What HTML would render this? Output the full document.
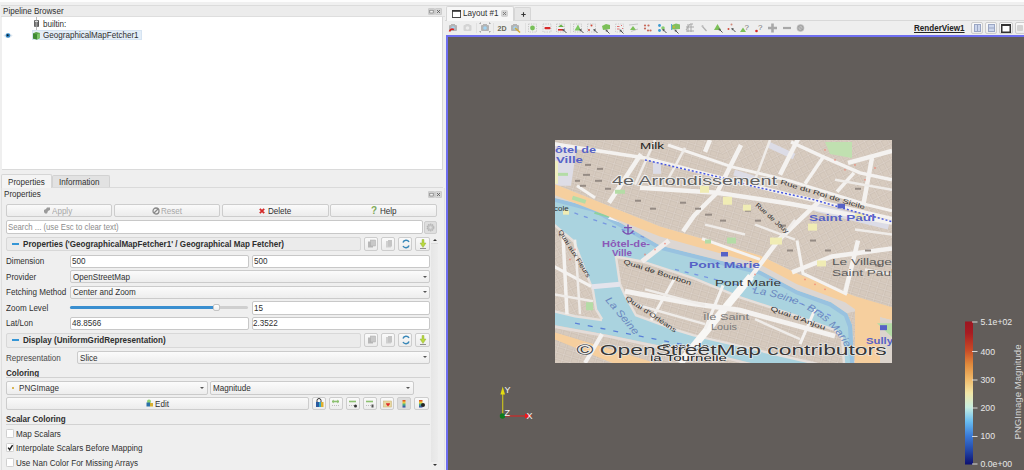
<!DOCTYPE html>
<html><head><meta charset="utf-8">
<style>
*{box-sizing:border-box;margin:0;padding:0}
html,body{width:1024px;height:470px;overflow:hidden;background:#efefef;font-family:"Liberation Sans",sans-serif;font-size:8px;color:#303030}
.a{position:absolute}
.t{position:absolute;white-space:nowrap;line-height:11px;font-size:8.5px;transform:scaleX(0.95);transform-origin:0 0}
.inp{position:absolute;background:#fff;border:1px solid #c8c8c8;border-radius:2px}
.btn{position:absolute;background:linear-gradient(#fafafa,#ececec);border:1px solid #cdcdcd;border-radius:2px}
.hdr{position:absolute;background:#ebebeb;border:1px solid #d8d8d8;border-radius:2px}
.cb{position:absolute;background:linear-gradient(#fbfbfb,#ededed);border:1px solid #cbcbcb;border-radius:2px}
.arr{position:absolute;width:0;height:0;border-left:2.5px solid transparent;border-right:2.5px solid transparent;border-top:2.5px solid #555;margin-left:0.5px;margin-top:0.3px}
.chk{position:absolute;width:8px;height:9px;background:#fff;border:1px solid #d0d0d0;border-radius:1.5px;box-shadow:0 0 0.5px #ddd}
.b{font-weight:bold;color:#2e2e2e}
</style></head><body>
<!-- top strip -->
<div class="a" style="left:0;top:0;width:1024px;height:2px;background:#fdfdfd"></div><div class="a" style="left:0;top:2px;width:1024px;height:3px;background:#f0f0f0"></div><div class="a" style="left:445px;top:5px;width:579px;height:1px;background:#dcdcdc"></div>

<!-- ===== Pipeline browser ===== -->
<div class="a" style="left:1px;top:5px;width:444px;height:12px;background:#ececec;border-top:1px solid #dcdcdc;border-bottom:1px solid #dedede"></div>
<div class="t" style="left:3px;top:6px">Pipeline Browser</div>
<div class="a" style="left:2px;top:17px;width:441px;height:152px;background:#fff;border-right:1px solid #d8d8d8"></div>

<!-- ===== splitter + tabs ===== -->
<div class="a" style="left:2px;top:169px;width:441px;height:1px;background:#dadada"></div>


<!-- tree -->
<div class="a" style="left:36px;top:17px;width:1px;height:14px;background:#bdbdbd"></div>
<div class="a" style="left:34px;top:20px;width:5px;height:7px;background:linear-gradient(90deg,#555,#9a9a9a 50%,#444);border-radius:1px"></div>
<div class="a" style="left:35px;top:21px;width:3px;height:1px;background:#ddd"></div>
<div class="t" style="left:43px;top:18.5px">builtin:</div>
<div class="a" style="left:32px;top:30px;width:110px;height:10px;background:#e4eef8;border:1px solid #d6e4f2"></div>
<svg class="a" style="left:32px;top:31px" width="9" height="9" viewBox="0 0 9 9"><path d="M1 2.5 L4 1 L8 2 L8 7 L5 8.5 L1 7.5Z" fill="#5aa04a"/><path d="M1 2.5 L5 3.5 L5 8.5 L1 7.5Z" fill="#3f8a35"/><path d="M5 3.5 L8 2 L8 7 L5 8.5Z" fill="#7cc46a"/></svg>
<div class="t" style="left:43px;top:29.7px">GeographicalMapFetcher1</div>
<svg class="a" style="left:2.5px;top:31.5px" width="10" height="7" viewBox="0 0 10 7"><path d="M0.3 3.5 Q5 -1.5 9.7 3.5 Q5 8.5 0.3 3.5Z" fill="#dde6ee"/><circle cx="5" cy="3.5" r="2.3" fill="#3288c8"/><circle cx="4.7" cy="3.2" r="1" fill="#0a1a28"/></svg>

<!-- dock buttons pipeline -->
<svg class="a" style="left:428px;top:8px" width="14" height="7" viewBox="0 0 14 7"><rect x="0.3" y="0.3" width="6.4" height="6.4" rx="1.2" fill="#d6d6d6" stroke="#bcbcbc" stroke-width="0.6"/><rect x="1.8" y="2.2" width="3.4" height="2.8" fill="#f2f2f2" stroke="#666" stroke-width="0.6"/><rect x="7.3" y="0.3" width="6.4" height="6.4" rx="1.2" fill="#d6d6d6" stroke="#bcbcbc" stroke-width="0.6"/><path d="M9 2 L12 5 M12 2 L9 5" stroke="#555" stroke-width="0.8"/></svg>


<!-- tabs -->
<div class="a" style="left:1px;top:187px;width:442px;height:1px;background:#dadada"></div>
<div class="a" style="left:1px;top:174px;width:51px;height:14px;background:#f4f4f4;border:1px solid #d6d6d6;border-bottom:none;border-radius:2px 2px 0 0"></div>
<div class="a" style="left:52px;top:175px;width:57.5px;height:12px;background:#e2e2e2;border:1px solid #d2d2d2;border-bottom:none;border-radius:2px 2px 0 0"></div>
<div class="t" style="left:8px;top:176.5px">Properties</div>
<div class="t" style="left:59px;top:176.5px">Information</div>
<div class="t" style="left:3.5px;top:189.2px">Properties</div>
<svg class="a" style="left:428px;top:191px" width="14" height="7" viewBox="0 0 14 7"><rect x="0.3" y="0.3" width="6.4" height="6.4" rx="1.2" fill="#d6d6d6" stroke="#bcbcbc" stroke-width="0.6"/><rect x="1.8" y="2.2" width="3.4" height="2.8" fill="#f2f2f2" stroke="#666" stroke-width="0.6"/><rect x="7.3" y="0.3" width="6.4" height="6.4" rx="1.2" fill="#d6d6d6" stroke="#bcbcbc" stroke-width="0.6"/><path d="M9 2 L12 5 M12 2 L9 5" stroke="#555" stroke-width="0.8"/></svg>


<!-- buttons -->
<div class="btn" style="left:6px;top:204px;width:106px;height:13px"></div>
<svg class="a" style="left:43px;top:207px" width="8" height="7" viewBox="0 0 8 7"><path d="M1 3 L3 2 L4 0.5 L7 0.5 L7 3 L5 4 L4 6.5 L2 6.5 L1 5Z" fill="#9a9a9a"/></svg>
<div class="t" style="left:52px;top:206px;color:#a8a8a8">Apply</div>
<div class="btn" style="left:114px;top:204px;width:106px;height:13px"></div>
<svg class="a" style="left:152px;top:207px" width="8" height="8" viewBox="0 0 8 8"><circle cx="4" cy="4" r="3" fill="none" stroke="#888" stroke-width="1.3"/><path d="M2 6 L6 2" stroke="#888" stroke-width="1.3"/></svg>
<div class="t" style="left:161px;top:206px;color:#a8a8a8">Reset</div>
<div class="btn" style="left:222px;top:204px;width:107px;height:13px"></div>
<svg class="a" style="left:259px;top:207.5px" width="6" height="6" viewBox="0 0 6 6"><path d="M0.8 0.8 L5.2 5.2 M5.2 0.8 L0.8 5.2" stroke="#d42a2a" stroke-width="1.8"/></svg>
<div class="t" style="left:268px;top:206px">Delete</div>
<div class="btn" style="left:330px;top:204px;width:107px;height:13px"></div>
<div class="t" style="left:370.5px;top:204.5px;color:#80aa58;font-size:10.5px;font-weight:bold">?</div>
<div class="t" style="left:379.5px;top:206px">Help</div>

<!-- search -->
<div class="inp" style="left:6px;top:220px;width:417px;height:14px"></div>
<div class="t" style="left:7.5px;top:222.2px;color:#8c8c8c;font-size:8.2px">Search ... (use Esc to clear text)</div>
<div class="btn" style="left:424px;top:221px;width:13px;height:13px;background:#dedede"></div><svg class="a" style="left:426px;top:223px" width="9" height="9" viewBox="0 0 9 9"><circle cx="4.5" cy="4.5" r="3.3" fill="#c4c4c4" stroke="#b4b4b4" stroke-width="1.2" stroke-dasharray="1.3 0.8"/><circle cx="4.5" cy="4.5" r="1.2" fill="#dedede"/></svg>

<!-- section header 1 -->
<div class="hdr" style="left:6px;top:237px;width:355px;height:14px"></div>
<div class="a" style="left:12px;top:242.5px;width:7px;height:2.5px;background:#3596d6"></div>
<div class="t b" style="left:23px;top:239px">Properties ('GeographicalMapFetcher1' / Geographical Map Fetcher)</div>
<div class="btn" style="left:364px;top:237px;width:14px;height:14px"></div>
<div class="btn" style="left:381px;top:237px;width:14px;height:14px"></div>
<div class="btn" style="left:398px;top:237px;width:14px;height:14px"></div>
<div class="btn" style="left:415px;top:237px;width:14.5px;height:14px"></div><svg class="a" style="left:364px;top:237px" width="67" height="14" viewBox="0 0 67 14">
<rect x="4" y="4.5" width="5" height="6" fill="#b8b8b8"/><rect x="6.5" y="3" width="5" height="6" fill="#c8c8c8" stroke="#aaa" stroke-width="0.5"/>
<rect x="22" y="4" width="5" height="6.5" fill="#d0d0d0"/><rect x="24" y="3" width="4" height="6.5" fill="#c4c4c4"/>
<path d="M39 5.5 A3.3 3.3 0 0 1 45 5" stroke="#3a88b8" stroke-width="1.5" fill="none"/><path d="M45 8.5 A3.3 3.3 0 0 1 39 9" stroke="#3a88b8" stroke-width="1.5" fill="none"/>
<path d="M58 2.5 L60 2.5 L60 6 L62 6 L59 10.5 L56 6 L58 6Z" fill="#b8d840" stroke="#8aa830" stroke-width="0.4"/><rect x="56" y="11" width="6" height="0.8" fill="#777"/>
</svg>

<!-- rows -->
<div class="t" style="left:6px;top:255.9px">Dimension</div>
<div class="inp" style="left:70px;top:255px;width:179px;height:13px"></div>
<div class="t" style="left:72px;top:255.9px">500</div>
<div class="inp" style="left:252px;top:255px;width:178px;height:13px"></div>
<div class="t" style="left:254px;top:255.9px">500</div>

<div class="t" style="left:6px;top:271.5px">Provider</div>
<div class="cb" style="left:70px;top:270px;width:360px;height:13px"></div>
<div class="t" style="left:73px;top:271.5px">OpenStreetMap</div>
<div class="arr" style="left:422px;top:276px"></div>

<div class="t" style="left:6px;top:287.3px">Fetching Method</div>
<div class="cb" style="left:70px;top:286px;width:360px;height:13px"></div>
<div class="t" style="left:73px;top:287.3px">Center and Zoom</div>
<div class="arr" style="left:422px;top:291px"></div>

<div class="t" style="left:6px;top:302.5px">Zoom Level</div>
<div class="a" style="left:70px;top:306px;width:178px;height:3px;background:#cfcfcf;border-radius:2px"></div>
<div class="a" style="left:70px;top:306px;width:145px;height:3px;background:#3a8fd0;border-radius:2px"></div>
<div class="a" style="left:213px;top:304px;width:7px;height:7px;background:linear-gradient(#fff,#eee);border:1px solid #c4c4c4;border-radius:2px"></div>
<div class="inp" style="left:252px;top:301px;width:178px;height:14px"></div>
<div class="t" style="left:254px;top:302.5px">15</div>

<div class="t" style="left:6px;top:318px">Lat/Lon</div>
<div class="inp" style="left:70px;top:317px;width:179px;height:13px"></div>
<div class="t" style="left:72px;top:318px">48.8566</div>
<div class="inp" style="left:252px;top:317px;width:178px;height:13px"></div>
<div class="t" style="left:253px;top:318px">2.3522</div>

<!-- section header 2 -->
<div class="hdr" style="left:6px;top:333px;width:355px;height:14.5px"></div>
<div class="a" style="left:12px;top:338.5px;width:7px;height:2.5px;background:#3596d6"></div>
<div class="t b" style="left:23px;top:335px">Display (UniformGridRepresentation)</div>
<div class="btn" style="left:364px;top:333px;width:14px;height:14px"></div>
<div class="btn" style="left:381px;top:333px;width:14px;height:14px"></div>
<div class="btn" style="left:398px;top:333px;width:14px;height:14px"></div>
<div class="btn" style="left:415px;top:333px;width:14.5px;height:14px"></div><svg class="a" style="left:364px;top:333px" width="67" height="14" viewBox="0 0 67 14">
<rect x="4" y="4.5" width="5" height="6" fill="#b8b8b8"/><rect x="6.5" y="3" width="5" height="6" fill="#c8c8c8" stroke="#aaa" stroke-width="0.5"/>
<rect x="22" y="4" width="5" height="6.5" fill="#d0d0d0"/><rect x="24" y="3" width="4" height="6.5" fill="#c4c4c4"/>
<path d="M39 5.5 A3.3 3.3 0 0 1 45 5" stroke="#3a88b8" stroke-width="1.5" fill="none"/><path d="M45 8.5 A3.3 3.3 0 0 1 39 9" stroke="#3a88b8" stroke-width="1.5" fill="none"/>
<path d="M58 2.5 L60 2.5 L60 6 L62 6 L59 10.5 L56 6 L58 6Z" fill="#b8d840" stroke="#8aa830" stroke-width="0.4"/><rect x="56" y="11" width="6" height="0.8" fill="#777"/>
</svg>

<div class="t" style="left:6px;top:353px;color:#4a4a4a">Representation</div>
<div class="cb" style="left:77px;top:351px;width:353px;height:13px"></div>
<div class="t" style="left:80px;top:353px">Slice</div>
<div class="arr" style="left:422px;top:356px"></div>

<div class="t b" style="left:6px;top:368px">Coloring</div>
<div class="a" style="left:6px;top:377px;width:424px;height:1px;background:#d2d2d2"></div>
<div class="cb" style="left:6px;top:381px;width:202px;height:14px"></div>
<div class="a" style="left:12px;top:387px;width:2px;height:2px;background:#d0a020;border-radius:1px"></div>
<div class="t" style="left:19px;top:383px">PNGImage</div>
<div class="arr" style="left:199px;top:387px"></div>
<div class="cb" style="left:210px;top:381px;width:204px;height:14px"></div>
<div class="t" style="left:212.5px;top:383px">Magnitude</div>
<div class="arr" style="left:405px;top:387px"></div>

<div class="btn" style="left:6px;top:397px;width:303px;height:13px"></div>
<svg class="a" style="left:145.5px;top:399px" width="8" height="8" viewBox="0 0 8 8"><circle cx="3" cy="2.5" r="2" fill="#90d070"/><rect x="0.5" y="3.5" width="3.5" height="4" fill="#2a70a8"/><rect x="4" y="4" width="3" height="3.5" fill="#d8b030"/></svg>
<div class="t" style="left:155px;top:398.5px">Edit</div>
<div class="btn" style="left:312px;top:397px;width:14px;height:13px"></div>
<div class="btn" style="left:329px;top:397px;width:14px;height:13px"></div>
<div class="btn" style="left:346px;top:397px;width:14px;height:13px"></div>
<div class="btn" style="left:363px;top:397px;width:14px;height:13px"></div>
<div class="btn" style="left:380px;top:397px;width:14px;height:13px"></div>
<div class="btn" style="left:397px;top:397px;width:14px;height:13px;background:#dcdcdc"></div>
<div class="btn" style="left:414px;top:397px;width:15px;height:13px"></div><svg class="a" style="left:312px;top:397px" width="118" height="13" viewBox="0 0 118 13">
<rect x="4" y="5" width="3" height="5" fill="#2a5aa0"/><rect x="7" y="5" width="2" height="5" fill="#38a8c8"/><rect x="9" y="5" width="2.5" height="5" fill="#e0b030"/><path d="M5 5 L5 3.5 A2 2 0 0 1 9 3.5 L9 5" stroke="#333" stroke-width="1" fill="none"/>
<g transform="translate(17 0)"><path d="M3 4.5 L10 4.5" stroke="#8cc070" stroke-width="1.6"/><path d="M3 4.5 L5 3 M3 4.5 L5 6 M10 4.5 L8 3 M10 4.5 L8 6" stroke="#8cc070" stroke-width="0.8"/><path d="M3 8.5 L10 8.5" stroke="#999" stroke-width="0.6" stroke-dasharray="1 1"/></g>
<g transform="translate(34 0)"><path d="M3 4.5 L10 4.5" stroke="#8cc070" stroke-width="1.6"/><path d="M3 8.5 L8 8.5" stroke="#999" stroke-width="0.6" stroke-dasharray="1 1"/><circle cx="9.5" cy="9" r="1.5" fill="#333"/></g>
<g transform="translate(51 0)"><path d="M3 4.5 L10 4.5" stroke="#8cc070" stroke-width="1.6"/><path d="M3 8.5 L8 8.5" stroke="#999" stroke-width="0.6" stroke-dasharray="1 1"/><rect x="8.5" y="7.5" width="2" height="3" fill="#555"/></g>
<g transform="translate(68 0)"><rect x="3.5" y="4" width="8" height="6" fill="#e8d8a0" stroke="#c8b070" stroke-width="0.5"/><path d="M6 7 Q6.5 5.5 8 6.5 Q9.5 5.5 10 7 L8 9.5Z" fill="#e02828"/></g>
<g transform="translate(85 0)"><rect x="5.5" y="3" width="3" height="7.5" fill="url(#cbar)"/></g>
<g transform="translate(102 0)"><rect x="5" y="3" width="3.5" height="7.5" fill="url(#cbar)"/><circle cx="9" cy="8" r="2" fill="#222"/></g>
<defs><linearGradient id="cbar" x1="0" y1="0" x2="0" y2="1"><stop offset="0" stop-color="#e04020"/><stop offset="0.35" stop-color="#e8d040"/><stop offset="0.6" stop-color="#50b080"/><stop offset="1" stop-color="#3040b0"/></linearGradient></defs>
</svg>

<div class="t b" style="left:6px;top:414px">Scalar Coloring</div>
<div class="a" style="left:6px;top:424px;width:424px;height:1px;background:#d2d2d2"></div>

<div class="chk" style="left:6px;top:429px"></div>
<div class="t" style="left:16px;top:429px">Map Scalars</div>
<div class="chk" style="left:6px;top:443px"></div>
<svg class="a" style="left:7px;top:444px" width="7" height="7" viewBox="0 0 7 7"><path d="M1.2 3.6 L2.7 5.6 L5.6 1.2" stroke="#222" stroke-width="1.5" fill="none"/></svg>
<div class="t" style="left:16px;top:443px">Interpolate Scalars Before Mapping</div>
<div class="chk" style="left:6px;top:458px"></div>
<div class="t" style="left:16px;top:458px">Use Nan Color For Missing Arrays</div>

<!-- scrollbar -->
<div class="a" style="left:431px;top:244px;width:7px;height:218px;background:linear-gradient(90deg,#e6e6e6,#ececec)"></div>
<div class="a" style="left:431px;top:243px;width:7px;height:1px;background:#dcdcdc"></div>
<div class="arr" style="left:432px;top:238.5px;border-left-width:2.5px;border-right-width:2.5px;border-top:none;border-bottom:2.5px solid #333"></div>
<div class="arr" style="left:432px;top:464px;border-left-width:2.5px;border-right-width:2.5px;border-top-width:2.5px;border-top-color:#333"></div>
<div class="a" style="left:443.5px;top:188px;width:1px;height:282px;background:#e2e2e2"></div>
<div class="a" style="left:1px;top:188px;width:1px;height:282px;background:#dedede"></div>

<!-- ===== Right side ===== -->
<!-- tab bar -->
<div class="a" style="left:445px;top:20px;width:579px;height:1px;background:#d8d8d8"></div>
<div class="a" style="left:446px;top:6px;width:68px;height:15px;background:#f7f7f7;border:1px solid #d6d6d6;border-bottom:none;border-radius:2px 2px 0 0"></div>
<svg class="a" style="left:452px;top:10px" width="9" height="8" viewBox="0 0 9 8"><rect x="0.5" y="0.5" width="8" height="7" fill="#fff" stroke="#555" stroke-width="1"/><rect x="0" y="0" width="9" height="1.8" fill="#333"/><rect x="0" y="7" width="9" height="1" fill="#444"/></svg>
<div class="t" style="left:463px;top:7.5px">Layout #1</div>
<svg class="a" style="left:501px;top:10px" width="7" height="7" viewBox="0 0 7 7"><rect width="7" height="7" rx="1.8" fill="#d4d4d4"/><path d="M2 2 L5 5 M5 2 L2 5" stroke="#777" stroke-width="0.9"/></svg>
<div class="a" style="left:514px;top:7px;width:17px;height:13px;background:#e6e6e6;border:1px solid #d6d6d6;border-bottom:none;border-radius:2px 2px 0 0"></div>
<svg class="a" style="left:520.5px;top:12px" width="5" height="5" viewBox="0 0 5 5"><path d="M2.5 0.3 L2.5 4.7 M0.3 2.5 L4.7 2.5" stroke="#333" stroke-width="1.1"/></svg>

<!-- toolbar -->
<div class="a" style="left:446px;top:21px;width:578px;height:14px;background:#eeeeee"></div>
<!--TB--><svg class="a" style="left:446px;top:21px" width="370" height="14" viewBox="0 0 370 14"><rect x="3" y="4" width="8" height="6" rx="1" fill="#b4b4b4"/><rect x="5" y="3" width="4" height="2" fill="#b4b4b4"/><circle cx="7" cy="7" r="1.8" fill="#a0d4f4"/><path d="M3.5 10.5 Q5 7 8 8.5" stroke="#d82020" stroke-width="1.8" fill="none"/><rect x="17.5" y="4" width="8" height="6" rx="1" fill="#d4d4d4"/><rect x="19.5" y="3" width="4" height="2" fill="#d4d4d4"/><circle cx="21.5" cy="7" r="1.8" fill="#ececec"/><rect x="30" y="2" width="0.8" height="10" fill="#dcdcdc"/><rect x="35" y="4" width="8" height="6" rx="1" fill="#b4b4b4"/><rect x="37" y="3" width="4" height="2" fill="#b4b4b4"/><circle cx="39" cy="7" r="1.8" fill="#a0d4f4"/><path d="M34 3 L34 2 L35 2 M43 2 L44 2 L44 3 M34 10 L34 11 L35 11 M43 11 L44 11 L44 10" stroke="#777" stroke-width="0.7" fill="none"/><rect x="47" y="2" width="0.8" height="10" fill="#dcdcdc"/><text x="51.5" y="10" font-family="Liberation Sans" font-weight="bold" font-size="7" fill="#6a6a58" textLength="9" lengthAdjust="spacingAndGlyphs">2D</text><rect x="65" y="4" width="8" height="6" rx="1" fill="#b4b4b4"/><rect x="67" y="3" width="4" height="2" fill="#b4b4b4"/><circle cx="69" cy="7" r="1.8" fill="#a0d4f4"/><path d="M69 7 L74 11.5" stroke="#d0a838" stroke-width="1.6"/><rect x="79" y="2" width="0.8" height="10" fill="#dcdcdc"/><rect x="82.5" y="3.0" width="8" height="8" fill="none" stroke="#b4b4b4" stroke-width="0.7" stroke-dasharray="1.2 1.2"/><circle cx="86.5" cy="7" r="2.4" fill="#78c058"/><rect x="97.0" y="3.0" width="8" height="8" fill="none" stroke="#b4b4b4" stroke-width="0.7" stroke-dasharray="1.2 1.2"/><rect x="98.5" y="6" width="6" height="2.2" rx="0.8" fill="#d82828"/><rect x="110.5" y="3.0" width="8" height="8" fill="none" stroke="#b4b4b4" stroke-width="0.7" stroke-dasharray="1.2 1.2"/><path d="M112 6 L115 3.5 L118 6Z" fill="#68b048"/><rect x="112" y="8" width="5" height="1.6" fill="#d82828"/><path d="M117 8.5 L120.5 12.0" stroke="#555" stroke-width="1"/><path d="M116.5 8.0 L119 8.5 L117 10.5Z" fill="#555"/><rect x="124" y="2" width="0.8" height="10" fill="#dcdcdc"/><rect x="127.5" y="3.0" width="8" height="8" fill="none" stroke="#b4b4b4" stroke-width="0.7" stroke-dasharray="1.2 1.2"/><path d="M128.5 9.5 L132 3.5 L135 9.5Z" fill="#7cc860"/><path d="M134 8.5 L137.5 12.0" stroke="#555" stroke-width="1"/><path d="M133.5 8.0 L136 8.5 L134 10.5Z" fill="#555"/><rect x="141.5" y="3.0" width="8" height="8" fill="none" stroke="#b4b4b4" stroke-width="0.7" stroke-dasharray="1.2 1.2"/><circle cx="145.5" cy="4.5" r="1" fill="#d04a3a"/><circle cx="143" cy="9" r="1" fill="#d04a3a"/><path d="M148 8.5 L151.5 12.0" stroke="#555" stroke-width="1"/><path d="M147.5 8.0 L150 8.5 L148 10.5Z" fill="#555"/><path d="M156 5 L160 3 L164 4 L164 8 L157 9Z" fill="#7cc058"/><path d="M160 9 L163.5 12.5" stroke="#555" stroke-width="1"/><path d="M159.5 8.5 L162 9 L160 11Z" fill="#555"/><rect x="169.5" y="3.0" width="8" height="8" fill="none" stroke="#c0c0c0" stroke-width="0.7" stroke-dasharray="1.2 1.2"/><g fill="#e07070"><rect x="171" y="5" width="2.5" height="1"/><rect x="171" y="7.5" width="2.5" height="1"/><rect x="175" y="4" width="1" height="1"/><rect x="176" y="7" width="1" height="1"/></g><path d="M174 9 L177.5 12.5" stroke="#555" stroke-width="1"/><path d="M173.5 8.5 L176 9 L174 11Z" fill="#555"/><path d="M184 9 L187 5 L190 9Z" fill="#7cc058"/><path d="M183 4 L192 3 M185 10.5 L192 8" stroke="#aaa" stroke-width="0.6"/><g fill="#c86a5a"><circle cx="199" cy="4.5" r="1.1"/><circle cx="202.5" cy="4.5" r="1.1"/><circle cx="199" cy="7.5" r="1.1"/><circle cx="202" cy="9.5" r="1.1"/><circle cx="204.5" cy="9.5" r="1.1"/></g><g fill="#3a9ad0"><circle cx="213.5" cy="4.5" r="1.4"/><circle cx="213.5" cy="9.5" r="1.4"/></g><circle cx="217" cy="7" r="1.8" fill="#88cc70"/><path d="M217 8.5 L220.5 12.0" stroke="#555" stroke-width="1"/><path d="M216.5 8.0 L219 8.5 L217 10.5Z" fill="#555"/><path d="M226 4 L230 2.5 L234 3.5 L234 8 L226 8.5Z" fill="#82c060"/><rect x="225" y="3" width="1" height="6" fill="#60a8d8"/><circle cx="228" cy="6" r="0.9" fill="#d8b030"/><path d="M229 9 L232.5 12.5" stroke="#555" stroke-width="1"/><path d="M228.5 8.5 L231 9 L229 11Z" fill="#555"/><g stroke="#a8a8a8" stroke-width="1" fill="none"><path d="M240 9 L244 3 L247 3 M240 6 L248 6 M240 10 L248 10 M242 3 L242 11 M245 3 L245 11"/></g><path d="M256 5 L260.5 10" stroke="#b0b0b0" stroke-width="1.2"/><circle cx="256.5" cy="5" r="1" fill="#c0c0c0"/><path d="M268 9 L271.5 3 L275 9Z" fill="#7cc058"/><path d="M273 8 L276.5 11.5" stroke="#555" stroke-width="1"/><path d="M272.5 7.5 L275 8 L273 10Z" fill="#555"/><circle cx="282.5" cy="8" r="1" fill="#d04a3a"/><circle cx="285.5" cy="3.5" r="1" fill="#d08a7a"/><path d="M286 7.5 L289.5 11.0" stroke="#555" stroke-width="1"/><path d="M285.5 7.0 L288 7.5 L286 9.5Z" fill="#555"/><path d="M294 11 L297 6.5 L300 11Z" fill="#7cc058"/><text x="298.5" y="9" font-family="Liberation Sans" font-size="8" fill="#777">?</text><circle cx="310.5" cy="10" r="1.3" fill="#d82828"/><text x="312" y="8.5" font-family="Liberation Sans" font-size="8" fill="#777">?</text><path d="M322 7 L331 7 M326.5 2.5 L326.5 11.5" stroke="#a8a8a8" stroke-width="2.6"/><path d="M337 7 L345 7" stroke="#a8a8a8" stroke-width="2.2"/><circle cx="354.5" cy="7" r="3.8" fill="#bdbdbd"/><circle cx="354.5" cy="7" r="2.6" fill="none" stroke="#999" stroke-width="0.8"/><path d="M352.5 5 L356.5 9" stroke="#999" stroke-width="0.8"/></svg><!--/TB-->
<div class="t b" style="left:914px;top:23px;text-decoration:underline;color:#222">RenderView1</div>
<div class="btn" style="left:971px;top:22px;width:12px;height:12px"></div>
<svg class="a" style="left:974px;top:24px" width="7" height="8" viewBox="0 0 7 8"><rect x="0.5" y="0.5" width="6" height="7" fill="#ccd6ec" stroke="#9aa6c4"/><line x1="3.5" y1="0.5" x2="3.5" y2="7.5" stroke="#9aa6c4"/></svg>
<div class="btn" style="left:985px;top:22px;width:12px;height:12px"></div>
<svg class="a" style="left:988px;top:24px" width="7" height="8" viewBox="0 0 7 8"><rect x="0.5" y="0.5" width="6" height="7" fill="#ccd6ec" stroke="#9aa6c4"/><line x1="0.5" y1="4" x2="6.5" y2="4" stroke="#9aa6c4"/></svg>
<div class="btn" style="left:999px;top:22px;width:14px;height:12px"></div>
<svg class="a" style="left:1001px;top:23.5px" width="10" height="9" viewBox="0 0 10 9"><rect x="0.75" y="0.75" width="8.5" height="7.5" fill="#fff" stroke="#333" stroke-width="1.5"/><rect x="0" y="0" width="10" height="2" fill="#333"/></svg>
<div class="btn" style="left:1015px;top:22px;width:12px;height:12px"></div>
<div class="a" style="left:1017px;top:25px;width:6px;height:6px;background:#d2d2d2;border-radius:1px"></div>

<div class="a" style="left:446px;top:35px;width:578px;height:435px;background:#625d5a;border-left:2.5px solid #6e6ef0;border-top:2px solid #6e6ef0"></div>

<svg class="a" style="left:555px;top:140px" width="337" height="223" viewBox="0 0 337 224" preserveAspectRatio="none">
<defs><clipPath id="mc"><rect width="337" height="224"/></clipPath>
<pattern id="bld" width="8" height="6" patternUnits="userSpaceOnUse" patternTransform="rotate(17)">
<rect width="8" height="6" fill="#dfd6cd"/><rect x="0.5" y="0.5" width="6.5" height="4.5" fill="#d6cabe" stroke="#c8baae" stroke-width="0.6"/></pattern>
<pattern id="bld2" width="7" height="7" patternUnits="userSpaceOnUse" patternTransform="rotate(-28)">
<rect width="7" height="7" fill="#e0d7ce"/><rect x="0.5" y="0.5" width="5.5" height="5.5" fill="#d7cbbf" stroke="#c9bbaf" stroke-width="0.6"/></pattern>
</defs>
<g clip-path="url(#mc)">
<rect width="337" height="224" fill="url(#bld)"/>
<path d="M160 0 L337 0 L337 110 L240 135 L190 60Z" fill="url(#bld2)"/>
<!-- plaza top-left -->
<path d="M-1 2 L22 6 L16 46 L-1 46Z" fill="#dedde6"/>
<path d="M-1 18 L3 18 L3 44 L-1 44Z" fill="#f0eec0"/>
<!-- pedestrian strips -->
<g fill="#dcdce6"><rect x="215" y="2" width="28" height="6" transform="rotate(25 215 2)"/><rect x="-1" y="12" width="18" height="8" transform="rotate(20 0 12)"/><rect x="180" y="30" width="22" height="6" transform="rotate(17 180 30)"/><rect x="262" y="64" width="75" height="8" transform="rotate(14 262 64)"/><rect x="98" y="22" width="8" height="12"/><rect x="150" y="125" width="40" height="5" transform="rotate(-15 150 125)"/></g>
<!-- river -->
<path d="M-1 58 L39 68 L105 106 L205 131 L242 151 L276 163 L292 174 L297 186 L299 224 L-1 224Z" fill="#aad3df"/>
<path d="M-1 58 L39 68 L105 106 L205 131 L242 151 L276 163 L292 174 L297 186 L299 224 L295 224 L293 188 L289 177 L274 167 L241 155 L204 135 L104 110 L38 72 L-1 62Z" fill="#98c2e0"/>
<!-- boat -->
<path d="M55 76 L68 80 L66 83 L53 79Z" fill="#f4f4f4"/><path d="M40 72 L55 76 L54 78 L39 74Z" fill="#8cd0a0"/>
<!-- islands -->
<path d="M-1 84 L19 101 L34 140 L38 150 L41 170 L47 181 L20 176 L-1 171Z" fill="url(#bld2)"/>
<path d="M60 116 L87 121 L139 138 L185 157 L242 176 L280 190 L287 198 L290 225 L262 225 L245 221 L138 196 L120 190.5 L81 176 L70 156 L65 145Z" fill="url(#bld)"/>
<path d="M-1 186 L55 196 L102 206 L145 211.5 L200 225 L-1 225Z" fill="url(#bld)"/>
<path d="M-1 186 L55 196 L102 206 L145 211.5 L200 225 L190 225 L145 214 L102 209 L55 199 L-1 189Z" fill="#e4dcd8"/>
<!-- island quay outlines -->
<g stroke="#e6e0dc" stroke-width="2.4" fill="none">
<path d="M-1 85 L19 102 L34 141 L38 151 L41 170 L47 180"/>
<path d="M60 117 L87 122 L139 139 L185 158 L242 177 L280 191 L287 199 L289 224"/>
<path d="M61 117 L65 145 L70 156 L81 176 L120 190.5 L138 196 L245 221 L262 225"/>
<path d="M-1 172 L20 177 L47 181"/>
</g>
<!-- river dashes -->
<g stroke="#7898e0" stroke-width="1.3" stroke-dasharray="4 6" fill="none"><path d="M10 70 L90 98"/><path d="M120 130 L200 150"/><path d="M20 184 L140 208" stroke="#5a80d8" stroke-dasharray="5 8"/><path d="M235 160 L280 178"/></g>
<!-- orange roads -->
<path d="M-1 58 L39 68 L105 106 L205 131 L242 151 L276 163 L292 174 L300 172 L300 224 L337 224 L337 170 L300 157 L242 134 L205 116 L105 87 L-1 44Z" fill="#dcd6d2"/><path d="M-1 44 L105 87 L205 116 L242 134 L300 157 L337 168 L337 181 L325 178 L325 225 L300 225 L300 170 L290 163 L242 145 L205 125 L105 97 L-1 55Z" fill="#f6cf9e"/><path d="M325 178 L337 181 L337 225 L325 225Z" fill="#dcd4cc"/>
<path d="M-1 193 L55 210 L97 223 L100 225 L60 225 L-1 200Z" fill="#f6cf9e"/>
<!-- white streets -->
<g stroke="#f4f2f0" stroke-width="4.5" fill="none" stroke-linecap="butt">
<path d="M-1 4 L90 18 L167 38 L235 55 L337 79" stroke-width="3.5"/>
<path d="M113 5 L177 27 L235 41 L312 65 L337 71" stroke-width="3"/>
<path d="M269 16 L250 44" stroke-width="3.5"/>
<path d="M299 33 L282 52" stroke-width="3.5"/>
<path d="M236 2 L266 16 L305 33 L337 40" stroke-width="3.5"/>
<path d="M85 48 L162 53 L235 64 L337 83"/>
<path d="M186 5 L162 53 L139 76 L128 92"/>
<path d="M86 14 L54 63"/>
<path d="M268 58 L223 101 L185 152"/>
<path d="M196 137 L138 208 L125 224" stroke-width="7.5" stroke="#f8f7f5"/>
<path d="M147 99 L205 120" stroke-width="3"/><path d="M242 101 L248 134 L292 155" stroke-width="3"/>
<path d="M243 -1 L225 35"/>
<path d="M293 23 L337 11"/>
<path d="M317 18 L308 67"/>
<path d="M237 133 L277 117 L337 109"/>
<path d="M303 101 L290 154"/>
<path d="M155 0 L150 12"/>
<path d="M40 58 L22 46" stroke-width="3"/>
<path d="M87 122 L114 101" stroke-width="5" stroke="#f0ecea"/>
<path d="M8 96 L12 175" stroke-width="3.5"/>
<path d="M-1 127 L36 147" stroke-width="3"/>
<path d="M70 152 L135 164 L185 171 L280 197" stroke-width="5"/>
<path d="M119 140 L96 181" stroke-width="3"/>
<path d="M168 146 L150 190" stroke-width="3"/>
<path d="M260 170 L245 205" stroke-width="3"/>
<path d="M30 224 L47 195" stroke-width="4"/>
<g stroke-width="2.5" stroke="#efece9"><path d="M100 0 L80 45"/><path d="M130 8 L110 45"/><path d="M215 0 L200 40"/><path d="M280 40 L337 50"/><path d="M200 85 L240 100"/><path d="M150 85 L190 95"/><path d="M90 150 L150 166"/><path d="M80 165 L150 185"/><path d="M200 180 L245 200"/><path d="M-1 155 L38 162"/><path d="M20 100 L25 175"/><path d="M300 90 L337 95"/><path d="M310 130 L337 135"/><path d="M240 80 L225 100"/></g>
</g>
<path d="M37 147.5 L65 145" stroke="#e4e4ec" stroke-width="5"/>
<!-- dark building spots -->
<g fill="#958b84">
<rect x="30" y="24" width="6" height="2"/><rect x="42" y="28" width="6" height="2"/><rect x="28" y="34" width="7" height="2"/>
<rect x="40" y="40" width="7" height="2"/><rect x="25" y="45" width="6" height="2"/><rect x="50" y="48" width="6" height="2"/><rect x="20" y="40" width="5" height="2"/>
<rect x="140" y="68" width="6" height="2"/><rect x="150" y="74" width="7" height="2"/><rect x="165" y="80" width="6" height="2"/>
<rect x="125" y="62" width="6" height="2"/><rect x="190" y="70" width="6" height="2"/><rect x="200" y="80" width="6" height="2"/>
<rect x="255" y="100" width="6" height="2"/><rect x="270" y="110" width="6" height="2"/><rect x="310" y="110" width="6" height="2"/>
<rect x="320" y="125" width="6" height="2"/><rect x="300" y="48" width="6" height="2"/><rect x="232" y="110" width="6" height="2"/>
<rect x="225" y="85" width="6" height="2"/><rect x="80" y="60" width="6" height="2"/><rect x="95" y="68" width="6" height="2"/>
</g>
<!-- yellow / green patches -->
<g fill="#f0ecb4">
<rect x="145" y="46" width="9" height="7"/><rect x="168" y="57" width="9" height="8"/><rect x="188" y="65" width="8" height="6"/><rect x="215" y="98" width="12" height="7"/><rect x="253" y="84" width="9" height="7"/><rect x="300" y="74" width="9" height="7"/><rect x="262" y="121" width="9" height="6"/><rect x="8" y="70" width="6" height="5"/>
</g>
<path d="M270 2 L297 2 L297 18 L275 14Z" fill="#c0e0b0"/><g fill="#b4dca6"><rect x="18" y="56" width="14" height="4" transform="rotate(18 18 56)"/><rect x="60" y="50" width="10" height="4"/><rect x="172" y="98" width="9" height="6"/><rect x="31" y="163" width="7" height="8"/><path d="M322 184 L337 184 L337 198Z"/><rect x="150" y="100" width="6" height="4"/><rect x="3" y="33" width="10" height="3"/></g>
<!-- red dot texture -->
<g fill="#f08070" opacity="0.75">
<circle cx="280" cy="20" r="0.9"/><circle cx="290" cy="30" r="0.9"/><circle cx="300" cy="25" r="0.9"/><circle cx="270" cy="10" r="0.9"/><circle cx="310" cy="40" r="0.9"/><circle cx="320" cy="28" r="0.9"/>
<circle cx="250" cy="140" r="0.9"/><circle cx="260" cy="145" r="0.9"/><circle cx="270" cy="150" r="0.9"/><circle cx="20" cy="110" r="0.9"/><circle cx="15" cy="120" r="0.9"/>
<circle cx="90" cy="115" r="0.9"/><circle cx="100" cy="110" r="0.9"/><circle cx="110" cy="104" r="0.9"/><circle cx="200" cy="135" r="0.9"/><circle cx="215" cy="140" r="0.9"/>
</g>
<!-- blue dotted metro -->
<path d="M90 20 L167 38 L200 47 L259 60 L300 72 L337 82" stroke="#4858e0" stroke-width="1.5" stroke-dasharray="2 2" fill="none"/>
<!-- labels -->
<g font-family="Liberation Sans" font-weight="bold" fill="#5662c6">
<text x="0" y="13.5" font-size="10" textLength="41" lengthAdjust="spacingAndGlyphs">ôtel de</text>
<text x="1" y="23.5" font-size="10" textLength="27" lengthAdjust="spacingAndGlyphs">Ville</text>
<text x="254" y="81.5" font-size="9.5" textLength="66" lengthAdjust="spacingAndGlyphs">Saint Paul</text>
<text x="134" y="129" font-size="9.5" textLength="71" lengthAdjust="spacingAndGlyphs">Pont Marie</text>
<text x="311" y="205" font-size="9.5" textLength="27" lengthAdjust="spacingAndGlyphs">Sully</text>
</g>
<rect x="282.5" y="64" width="7.5" height="4.7" fill="#5662c6"/>
<rect x="166" y="112.5" width="7" height="4.5" fill="#5662c6"/>
<rect x="325" y="186" width="7" height="5" fill="#5662c6"/>
<g font-family="Liberation Sans" fill="#8a58b8" font-weight="bold"><text x="47" y="107.5" font-size="8.5" textLength="48" lengthAdjust="spacingAndGlyphs">Hôtel-de-</text><text x="57" y="116.5" font-size="8.5" textLength="20" lengthAdjust="spacingAndGlyphs">Ville</text></g>
<path d="M73 85 L73 95 M69 88 L77 88 M67.5 91 Q73 98 78.5 91" stroke="#7a50b0" stroke-width="1.4" fill="none"/>
<g font-family="Liberation Sans" fill="#5a5a5a">
<text x="57" y="45.5" font-size="12.5" textLength="165" lengthAdjust="spacingAndGlyphs" fill="#606060" stroke="#f2f2f2" stroke-width="1.4" paint-order="stroke">4e Arrondissement</text>
<text x="85" y="9" font-size="8.5" fill="#222" textLength="24" lengthAdjust="spacingAndGlyphs">Milk</text>
<text x="-1" y="71" font-size="8" fill="#333">cole</text>
<text x="160" y="147" font-size="8.5" fill="#333" textLength="66" lengthAdjust="spacingAndGlyphs">Pont Marie</text>
<text x="277" y="126" font-size="8.5" textLength="60" lengthAdjust="spacingAndGlyphs">Le Village</text>
<text x="277" y="136.5" font-size="8.5" textLength="62" lengthAdjust="spacingAndGlyphs">Saint Paul</text>
<text x="148" y="181" font-size="8.5" fill="#7a7a7a" textLength="46" lengthAdjust="spacingAndGlyphs">Île Saint</text>
<text x="156" y="191" font-size="8.5" fill="#7a7a7a" textLength="26" lengthAdjust="spacingAndGlyphs">Louis</text>
</g>
<g font-family="Liberation Sans" fill="#333" font-size="6.5">
<text transform="translate(225 44) rotate(17)" textLength="88" lengthAdjust="spacingAndGlyphs">Rue du Roi de Sicile</text>
<text transform="translate(200 66) rotate(42)" textLength="42" lengthAdjust="spacingAndGlyphs">Rue de Jouy</text>
<text transform="translate(68 124) rotate(18)" textLength="71" lengthAdjust="spacingAndGlyphs">Quai de Bourbon</text>
<text transform="translate(70 160) rotate(34)" textLength="60" lengthAdjust="spacingAndGlyphs">Quai d'Orléans</text>
<text transform="translate(215 171) rotate(20)" textLength="58" lengthAdjust="spacingAndGlyphs">Quai d'Anjou</text>
<text transform="translate(3 92) rotate(58)" textLength="55" lengthAdjust="spacingAndGlyphs">Quai aux Fleurs</text>
</g>
<g font-family="Liberation Sans" fill="#6a88c0" font-size="9" font-style="italic">
<text transform="translate(50 161) rotate(50)" font-size="10" textLength="46" lengthAdjust="spacingAndGlyphs">La Seine</text>
<path id="bras" d="M198 154 Q268 164 290 208" fill="none"/><text font-size="10" dy="0"><textPath href="#bras" textLength="112" lengthAdjust="spacingAndGlyphs">La Seine - Bras Marie</textPath></text>
</g>
<g font-family="Liberation Sans" fill="#222" stroke="#f2f2f2" stroke-width="1" paint-order="stroke"><text x="107" y="211" font-size="9" textLength="47" lengthAdjust="spacingAndGlyphs">Pont de</text><text x="95" y="221.5" font-size="9.5" textLength="77" lengthAdjust="spacingAndGlyphs">la Tournelle</text></g>
<text x="21.6" y="215.8" font-size="15" font-family="Liberation Sans" fill="#383838" stroke="#eeeeee" stroke-width="1.1" paint-order="stroke" textLength="310" lengthAdjust="spacingAndGlyphs">© OpenStreetMap contributors</text>
</g>
</svg>
<!-- axes -->
<svg class="a" style="left:495px;top:380px" width="50" height="45" viewBox="0 0 50 45">
<line x1="7.7" y1="36" x2="7.7" y2="13" stroke="#c8c020" stroke-width="1.2"/>
<path d="M5.4 14.5 L7.7 6.5 L10 14.5Z" fill="#e4dc10"/>
<line x1="8" y1="36" x2="31" y2="36" stroke="#d82424" stroke-width="1.1"/>
<path d="M30 33.6 L37.5 36 L30 38.4Z" fill="#f01818"/>
<circle cx="7.5" cy="36" r="2.7" fill="#0e7a1e"/>
<g font-family="Liberation Sans" font-size="9" fill="#f4f4f4"><text x="9.5" y="13">Y</text><text x="9.5" y="35.5">Z</text><text x="31.5" y="38.5">X</text></g>
</svg>
<!-- color legend -->
<svg class="a" style="left:955px;top:310px" width="69" height="160" viewBox="0 0 69 160">
<defs><linearGradient id="cg" x1="0" y1="0" x2="0" y2="1">
<stop offset="0" stop-color="#9c1620"/><stop offset="0.08" stop-color="#a81c22"/><stop offset="0.2" stop-color="#c84a26"/><stop offset="0.3" stop-color="#e08a3c"/><stop offset="0.4" stop-color="#f0b868"/><stop offset="0.5" stop-color="#f2e6a6"/><stop offset="0.6" stop-color="#c8eee0"/><stop offset="0.7" stop-color="#68bcf0"/><stop offset="0.8" stop-color="#3a7ad8"/><stop offset="0.9" stop-color="#2448a8"/><stop offset="1" stop-color="#0c1070"/></linearGradient></defs>
<rect x="10" y="11.5" width="8" height="143" fill="url(#cg)"/>
<g stroke="#e4e4e4" stroke-width="0.9"><line x1="17" y1="12" x2="22.5" y2="12"/><line x1="17" y1="41.5" x2="22.5" y2="41.5"/><line x1="17" y1="70" x2="22.5" y2="70"/><line x1="17" y1="98" x2="22.5" y2="98"/><line x1="17" y1="126.5" x2="22.5" y2="126.5"/><line x1="17" y1="154" x2="22.5" y2="154"/></g>
<g font-family="Liberation Sans" font-size="8.7" fill="#e8e8e8">
<text x="25.5" y="14.8">5.1e+02</text><text x="25.5" y="45">400</text><text x="25.5" y="72.6">300</text><text x="25.5" y="101">200</text><text x="25.5" y="129">100</text><text x="25.5" y="156.5">0.0e+00</text>
<text transform="translate(66 129.5) rotate(-90)" font-size="9" fill="#d4d4d4" textLength="95" lengthAdjust="spacingAndGlyphs">PNGImage Magnitude</text>
</g>
</svg>

</body></html>
